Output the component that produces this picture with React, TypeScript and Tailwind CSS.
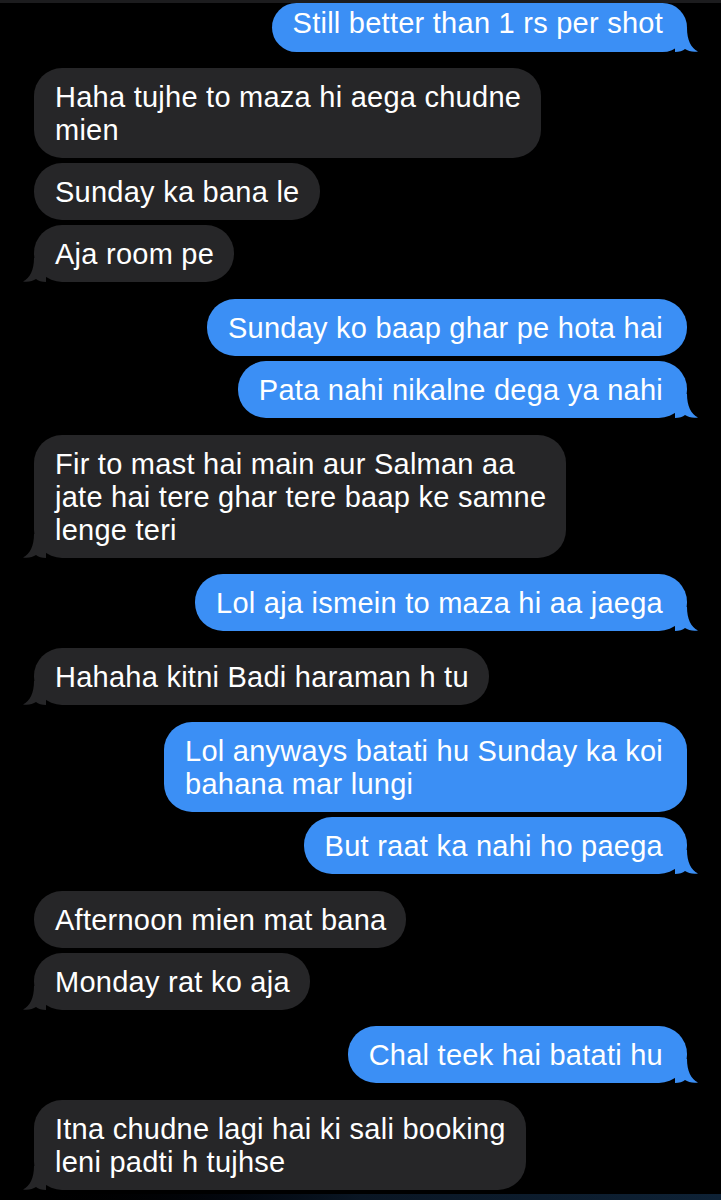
type Msg = {
  from: "me" | "them";
  lines: string[];
  gap: "group" | "inner";
  tail?: boolean;
};

const messages: Msg[] = [
  { from: "them", lines: ["Haha tujhe to maza hi aega chudne", "mien"], gap: "group" },
  { from: "them", lines: ["Sunday ka bana le"], gap: "inner" },
  { from: "them", lines: ["Aja room pe"], gap: "inner", tail: true },
  { from: "me", lines: ["Sunday ko baap ghar pe hota hai"], gap: "group" },
  { from: "me", lines: ["Pata nahi nikalne dega ya nahi"], gap: "inner", tail: true },
  {
    from: "them",
    lines: ["Fir to mast hai main aur Salman aa", "jate hai tere ghar tere baap ke samne", "lenge teri"],
    gap: "group",
    tail: true,
  },
  { from: "me", lines: ["Lol aja ismein to maza hi aa jaega"], gap: "group", tail: true },
  { from: "them", lines: ["Hahaha kitni Badi haraman h tu"], gap: "group", tail: true },
  { from: "me", lines: ["Lol anyways batati hu Sunday ka koi", "bahana mar lungi"], gap: "group" },
  { from: "me", lines: ["But raat ka nahi ho paega"], gap: "inner", tail: true },
  { from: "them", lines: ["Afternoon mien mat bana"], gap: "group" },
  { from: "them", lines: ["Monday rat ko aja"], gap: "inner", tail: true },
  { from: "me", lines: ["Chal teek hai batati hu"], gap: "group", tail: true },
  { from: "them", lines: ["Itna chudne lagi hai ki sali booking", "leni padti h tujhse"], gap: "group", tail: true },
];

function Tail({ side, color }: { side: "left" | "right"; color: string }) {
  return (
    <svg
      width="24"
      height="24"
      viewBox="0 0 24 24"
      className={
        side === "right"
          ? "absolute bottom-0 right-[-12px]"
          : "absolute bottom-0 left-[-12px] -scale-x-100"
      }
    >
      <path d="M0 0 H12 C12 12 16 20 23 23.5 C18 24.5 13 23 10 21 C8 23 4 24 0 24 Z" fill={color} />
    </svg>
  );
}

// clipped = the top bubble, partly cut off by the top edge of the screenshot
function Bubble({ msg, first, clipped }: { msg: Msg; first?: boolean; clipped?: boolean }) {
  const mine = msg.from === "me";
  const color = mine ? "#3b8ff5" : "#262628";
  return (
    <div
      className={`flex ${mine ? "justify-end" : "justify-start"} ${
        first ? "" : msg.gap === "group" ? "mt-[16.75px]" : "mt-[5px]"
      }`}
    >
      <div
        className={`relative rounded-[28px] text-white whitespace-nowrap tracking-[0.25px] ${
          mine ? "bg-[#3b8ff5] pl-[21px] pr-[24px]" : "bg-[#262628] pl-[21px] pr-[20px]"
        } ${clipped ? "pt-[4px] pb-[12px]" : "pt-[13px] pb-[11px]"}`}
      >
        {msg.lines.map((l, i) => (
          <div key={i}>{l}</div>
        ))}
        {msg.tail && <Tail side={mine ? "right" : "left"} color={color} />}
      </div>
    </div>
  );
}

export default function App() {
  return (
    <div
      className="h-[1200px] w-full overflow-hidden bg-black flex flex-col text-[29px] leading-[33px]"
      style={{ fontFamily: '"Liberation Sans", Arial, sans-serif' }}
    >
      <div className="h-[3px] bg-[#1c1c1e]" />
      <div className="flex flex-col px-[34px]">
        <Bubble first clipped msg={{ from: "me", lines: ["Still better than 1 rs per shot"], gap: "group", tail: true }} />
        <div className="mt-[16px]" />
        {messages.map((m, i) => (
          <Bubble key={i} msg={m} first={i === 0} />
        ))}
      </div>
      <div className="mt-auto h-[6px] bg-gradient-to-r from-black via-[#0a1624] to-[#0e2236]" />
    </div>
  );
}
